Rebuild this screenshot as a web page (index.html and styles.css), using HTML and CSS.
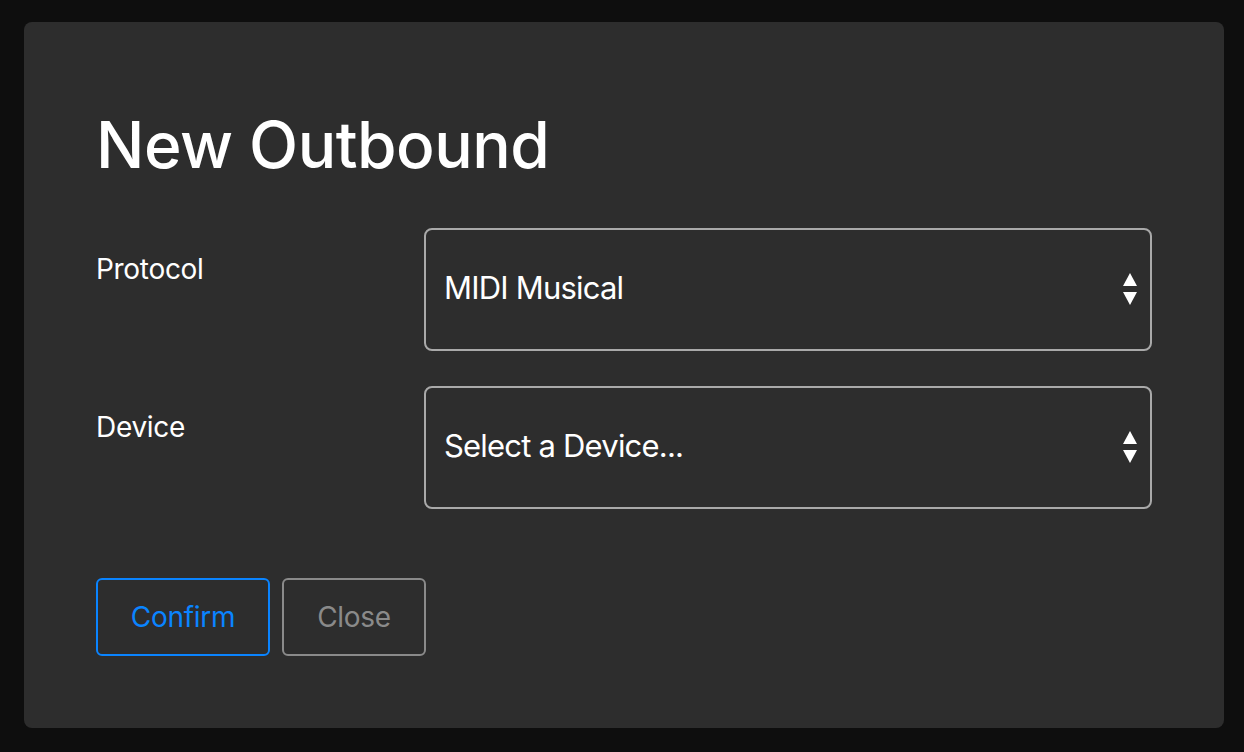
FILE: index.html
```html
<!DOCTYPE html>
<html>
<head>
<meta charset="utf-8">
<link rel="stylesheet" href="styles.css">
</head>
<body>
<div class="panel">
  <h1 class="title">New Outbound</h1>
  <div class="form">
    <div class="label">Protocol</div>
    <div class="select">
      <span class="value">MIDI Musical</span>
      <svg class="arrows" width="16" height="34" viewBox="0 0 16 34"><polygon points="8,0 15,13 1,13" fill="#fff"/><polygon points="1,19 15,19 8,32" fill="#fff"/></svg>
    </div>
    <div class="label">Device</div>
    <div class="select">
      <span class="value">Select a Device...</span>
      <svg class="arrows" width="16" height="34" viewBox="0 0 16 34"><polygon points="8,0 15,13 1,13" fill="#fff"/><polygon points="1,19 15,19 8,32" fill="#fff"/></svg>
    </div>
  </div>
  <div class="actions">
    <button class="btn btn-primary">Confirm</button>
    <button class="btn btn-secondary">Close</button>
  </div>
</div>
</body>
</html>
```
FILE: styles.css
```css
html, body {
  margin: 0;
  padding: 0;
  background: #0e0e0e;
}
body {
  padding: 22px 20px 24px 24px;
  font-family: Inter, "Noto Sans", sans-serif;
  color: #fff;
}
.panel {
  box-sizing: border-box;
  width: 1200px;
  height: 706px;
  background: #2d2d2d;
  border-radius: 8px;
  padding: 84px 72px 0 72px;
}
.title {
  margin: 0;
  font-size: 64px;
  font-weight: 500;
  line-height: 78px;
  letter-spacing: -0.5px;
}
.form {
  margin-top: 44px;
  display: grid;
  grid-template-columns: 328px 728px;
  row-gap: 35px;
}
.label {
  font-size: 28px;
  line-height: 34px;
  padding-top: 24px;
  letter-spacing: -0.3px;
}
.select {
  box-sizing: border-box;
  height: 123px;
  border: 2px solid #a9a9a9;
  border-radius: 8px;
  display: flex;
  align-items: center;
  justify-content: space-between;
  padding: 0 12px 4px 18px;
}
.value {
  font-size: 31px;
  letter-spacing: -0.8px;
}
.arrows {
  display: block;
  margin-top: 4px;
}
.actions {
  margin-top: 69px;
  display: flex;
  gap: 12px;
}
.btn {
  box-sizing: border-box;
  height: 78px;
  background: transparent;
  border-radius: 6px;
  font-family: Inter, "Noto Sans", sans-serif;
  font-size: 28px;
  letter-spacing: -0.3px;
  border: 2px solid;
  padding: 0;
}
.btn-primary {
  width: 174px;
  color: #0a84ff;
  border-color: #0a84ff;
}
.btn-secondary {
  width: 144px;
  color: #8a8a8a;
  border-color: #8a8a8a;
}
```
